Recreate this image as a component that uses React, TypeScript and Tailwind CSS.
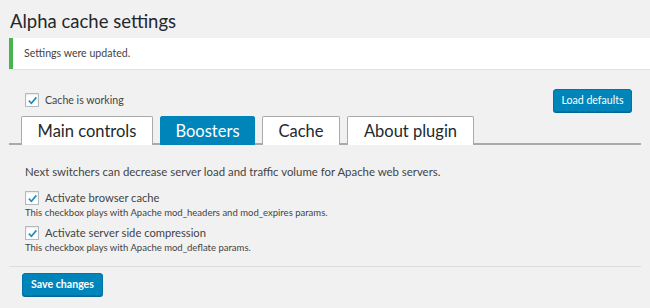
import { useState } from "react";

const tabs = [
  { label: "Main controls", w: "w-[132px]" },
  { label: "Boosters", w: "w-[95px]" },
  { label: "Cache", w: "w-[78px]" },
  { label: "About plugin", w: "w-[127px]" },
];

function Check({ checked }: { checked: boolean }) {
  return (
    <span className="flex h-[14px] w-[14px] shrink-0 items-center justify-center border border-[#b4b9be] bg-white shadow-[inset_0_1px_2px_rgba(0,0,0,0.1)]">
      {checked && (
        <svg viewBox="0 0 12 12" className="h-[11px] w-[11px]">
          <path d="M2 6.2 L4.8 9 L10.2 2.6" fill="none" stroke="#1e8cbe" strokeWidth="1.8" />
        </svg>
      )}
    </span>
  );
}

export default function App() {
  const [active, setActive] = useState(1);

  return (
    <div className="h-[308px] w-[650px] overflow-hidden bg-[#f1f1f1] font-['Lato',sans-serif] text-[#444]">
      {/* title */}
      <h1 className="pl-[10px] pt-[8px] text-[18.5px] leading-[26px] text-[#23282d]">Alpha cache settings</h1>

      {/* notice */}
      <div className="ml-[9px] mt-[4px] flex h-[31px] items-center border-l-4 border-[#46b450] bg-white pl-[11px] text-[10.6px] text-[#444] shadow-[0_1px_1px_rgba(0,0,0,0.06)]">
        Settings were updated.
      </div>

      {/* top row */}
      <div className="mt-[20px] flex items-center justify-between pl-[25px] pr-[18px]">
        <label className="flex items-center gap-[6px] text-[10.6px]">
          <Check checked />
          Cache is working
        </label>
        <button className="h-[23px] w-[79px] rounded-[3px] border border-[#0073aa] bg-[#0085ba] text-[10.6px] text-white shadow-[0_1px_0_#006799]">
          Load defaults
        </button>
      </div>

      {/* tabs */}
      <div className="mx-[9px] mt-[4px] flex gap-[7px] border-b-2 border-[#aaa] pl-[12px]">
        {tabs.map((t, i) => (
          <button
            key={t.label}
            onClick={() => setActive(i)}
            className={
              i === active
                ? `${t.w} -mb-[2px] h-[29px] rounded-t-[2px] border border-[#0085ba] bg-[#0085ba] text-[16.5px] leading-[26px] text-white`
                : `${t.w} -mb-[2px] h-[29px] rounded-t-[2px] border border-b-0 border-[#aaa] bg-white text-[16.5px] leading-[26px] text-[#23282d]`
            }
          >
            {t.label}
          </button>
        ))}
      </div>

      {/* content */}
      <div className="px-[25px] pt-[19px]">
        <p className="text-[11.4px] leading-[16px]">
          Next switchers can decrease server load and traffic volume for Apache web servers.
        </p>

        <div className="mt-[10px]">
          <label className="flex items-center gap-[6px] text-[11.2px] leading-[16px]">
            <Check checked />
            Activate browser cache
          </label>
          <p className="text-[9.5px] leading-[13px]">
            This checkbox plays with Apache mod_headers and mod_expires params.
          </p>
        </div>

        <div className="mt-[6px]">
          <label className="flex items-center gap-[6px] text-[11.2px] leading-[16px]">
            <Check checked />
            Activate server side compression
          </label>
          <p className="text-[9.5px] leading-[13px]">
            This checkbox plays with Apache mod_deflate params.
          </p>
        </div>
      </div>

      <div className="mx-[9px] mt-[12px] border-t border-[#ddd] pl-[13px] pt-[3px]">
        <button className="h-[23px] w-[81px] rounded-[3px] border border-[#0073aa] bg-[#0085ba] text-[10.6px] font-bold text-white shadow-[0_1px_0_#006799]">
          Save changes
        </button>
      </div>
    </div>
  );
}
